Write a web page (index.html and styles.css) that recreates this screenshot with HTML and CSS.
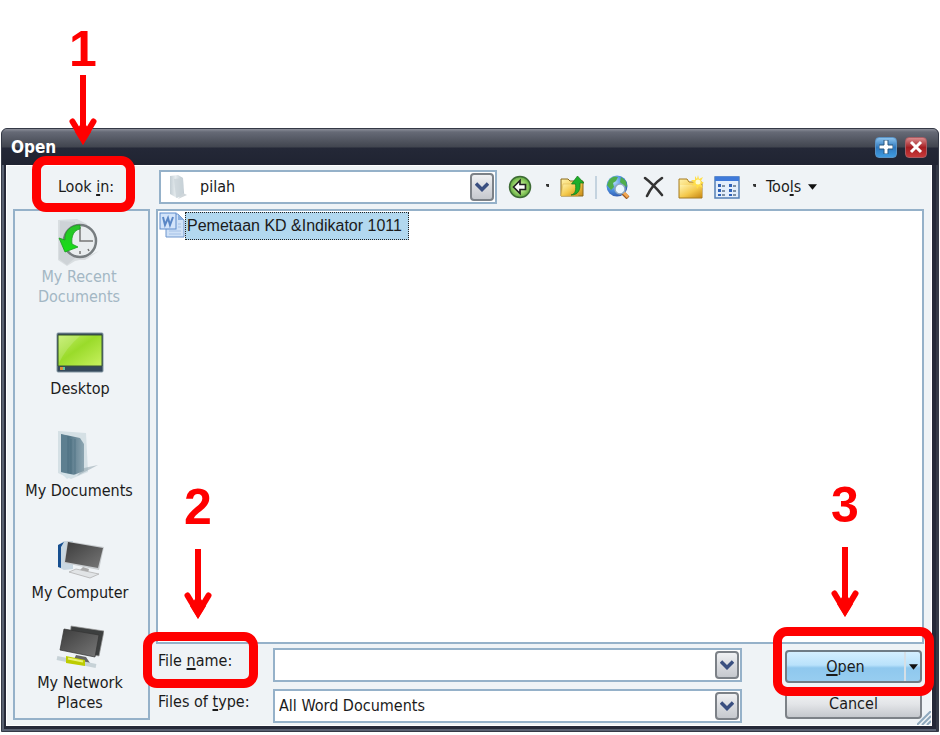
FILE: index.html
```html
<!DOCTYPE html>
<html lang="en">
<head>
<meta charset="utf-8">
<title>Open</title>
<link rel="stylesheet" href="styles.css">
</head>
<body>
<svg class="defs" aria-hidden="true">
  <defs>
    <linearGradient id="gold" x1="0" y1="0" x2="1" y2="1"><stop offset="0" stop-color="#fff3ae"/><stop offset=".55" stop-color="#f4c94c"/><stop offset="1" stop-color="#c98a16"/></linearGradient>
    <linearGradient id="lime" x1="0" y1="0" x2="1" y2="1"><stop offset="0" stop-color="#c3ee6a"/><stop offset=".45" stop-color="#9adb2a"/><stop offset="1" stop-color="#c8f160"/></linearGradient>
    <linearGradient id="green" x1="0" y1="0" x2="0" y2="1"><stop offset="0" stop-color="#2bc02b"/><stop offset="1" stop-color="#16e016"/></linearGradient>
    <linearGradient id="glass" x1="0" y1="0" x2="1" y2="0"><stop offset="0" stop-color="#8fa7b2"/><stop offset=".3" stop-color="#507385"/><stop offset="1" stop-color="#8da5b1"/></linearGradient>
    <linearGradient id="paper" x1="0" y1="0" x2="1" y2="0"><stop offset="0" stop-color="#c3ced4"/><stop offset=".4" stop-color="#e6ecef"/><stop offset="1" stop-color="#b3c0c8"/></linearGradient>
    <linearGradient id="screen" x1="0" y1="0" x2="1" y2="1"><stop offset="0" stop-color="#3c3c3c"/><stop offset="1" stop-color="#777"/></linearGradient>
    <radialGradient id="globe" cx=".35" cy=".3" r=".8"><stop offset="0" stop-color="#b7dcff"/><stop offset=".5" stop-color="#4b8fe0"/><stop offset="1" stop-color="#2b4fa5"/></radialGradient>
    <radialGradient id="back" cx=".5" cy=".5" r=".5"><stop offset="0" stop-color="#e2f6cf"/><stop offset=".6" stop-color="#9ad46c"/><stop offset="1" stop-color="#5fa83c"/></radialGradient>
    <symbol id="arrow" viewBox="0 0 28 70"><path d="M14 0V62" stroke="#f00" stroke-width="6" fill="none"/><path d="M3.500 46.500 14 64 24.500 46.500" fill="none" stroke="#f00" stroke-width="6" stroke-linecap="round"/><path d="M11 50H17L22 57 14 70 6 57Z" fill="#f00"/></symbol>
    <symbol id="chevron" viewBox="0 0 14 10"><path d="M1 1.500 7 7.500 13 1.500" fill="none" stroke="#3a4f80" stroke-width="3.500"/></symbol>
  </defs>
</svg>
<main class="dialog">
  <header class="titlebar">
    <h1 class="title">Open</h1>
    <button class="winbtn max" aria-label="Maximize"><svg viewBox="0 0 14 14"><path d="M5 0h4v5h5v4H9v5H5V9H0V5h5z" fill="#fff" stroke="#28567f"/></svg></button>
    <button class="winbtn close" aria-label="Close"><svg viewBox="0 0 14 14"><path d="M2 2 12 12M12 2 2 12" stroke="#fff" stroke-width="3"/></svg></button>
  </header>
  <div class="content">
    <div class="toolbar">
      <div class="lookin callout">
        <label for="look">Look <u>i</u>n:</label>
        <div class="pointer"><span class="num">1</span><svg><use href="#arrow"/></svg></div>
      </div>
      <div class="combo look">
        <svg class="folder" viewBox="0 0 18 24"><path d="M1 1 9 0 14 3 15 20 8 23 1 19Z" fill="url(#paper)"/><path d="M5 4 14 3V20L7 23Z" fill="#cbd5da" opacity=".8"/><path d="M14 18 18 20 9 24Z" fill="#cfd6da"/></svg>
        <select id="look"><option>pilah</option></select>
        <span class="drop"><svg><use href="#chevron"/></svg></span>
      </div>
      <div class="tools">
        <button class="tool" aria-label="Back"><svg viewBox="0 0 24 24"><circle cx="12" cy="12" r="10.500" fill="url(#back)" stroke="#3d6b35" stroke-width="1.500"/><path d="M5.500 12 12 5.500V9.500H17.500V14.500H12V18.500Z" fill="#fff" stroke="#222" stroke-width="1.700"/></svg></button>
        <span class="dot"></span>
        <button class="tool" aria-label="Up one level"><svg viewBox="0 0 24 24"><path d="M1 4H8L10 6H23V21H1Z" fill="url(#gold)" stroke="#8a6a1e"/><path d="M1 21 3 9H16L18 21Z" fill="url(#gold)" stroke="#d9b24d" stroke-width=".5"/><path d="M11 20C16 19 16 14 15.500 9H11.500L17.500 1 24 8H20C20.500 14 19 20 11 20Z" fill="#1fae2b" stroke="#127a1a" stroke-width=".7"/></svg></button>
        <span class="sep"></span>
        <button class="tool" aria-label="Search the Web"><svg viewBox="0 0 24 24"><circle cx="11" cy="11" r="10.500" fill="url(#globe)"/><path d="M3 5Q7 0 12 2L10 6 7 8 8 12 5 15 1 10ZM15 2 20 6 21 12 17 10 14 7Z" fill="#4fae4c"/><path d="M17 18 22 23" stroke="#9c5a22" stroke-width="4"/><path d="M17 17 22 22" stroke="#f3a751" stroke-width="3"/><circle cx="14" cy="14" r="5" fill="#eaf6ff" stroke="#8fa9c2" stroke-width="1.500"/></svg></button>
        <button class="tool" aria-label="Delete"><svg viewBox="0 0 24 24"><path d="M3 3Q11 9 20 20M20 3Q10 10 5 21" fill="none" stroke="#333" stroke-width="2.600" stroke-linecap="round"/></svg></button>
        <button class="tool folder-new" aria-label="Create New Folder"><svg viewBox="0 0 26 24"><path d="M1 4H9L11 7H24V23H1Z" fill="url(#gold)" stroke="#a57b20"/><path d="M2 10H24V22H2Z" fill="url(#gold)"/><path d="M20 0 21 4 25 2 23 6 26 8 23 9 25 13 21 11 19 14 18 10 14 11 16 8 13 5 17 5 17 1 19 4Z" fill="#ffdf4a"/><circle cx="20" cy="7" r="2.500" fill="#fffbd0"/></svg></button>
        <button class="tool views" aria-label="Views"><svg viewBox="0 0 26 24"><path d="M1 2H25V23H1Z" fill="#e3eefb" stroke="#5580b5" stroke-width="1.500"/><path d="M1 1.500H25V6H1Z" fill="#3f7ada"/><path d="M4 9h3v3H4zM15 9h3v3h-3zM4 14h3v3H4zM15 14h3v3h-3zM4 19h3v2H4zM15 19h3v2h-3z" fill="#2f62b8"/><path d="M8 11h3M19 11h3M8 16h3M19 16h3M8 20h3M19 20h3" stroke="#5d7186" stroke-width="1.500"/></svg></button>
        <span class="dot"></span>
        <button class="menu"><span>Too<u>l</u>s</span><svg viewBox="0 0 10 6"><path d="M0 0H10L5 6Z" fill="#111"/></svg></button>
      </div>
    </div>
    <div class="panes">
      <nav class="places">
        <a href="#" class="place dim"><svg viewBox="0 0 48 50"><path d="M3 4 22 3 32 8 34 42 20 45 12 50 3 44Z" fill="#d9dee1"/><path d="M5 5 20 6V42L12 49 4 43Z" fill="#c9cfd3" opacity=".7"/><path d="M24 44 44 35 30 44Z" fill="#d9dcdf"/><circle cx="25" cy="25" r="16" fill="#e9edef" stroke="#777d80" stroke-width="2.500"/><path d="M25 11V25H36M25 38v-3M38 25h-2M14 32l2-2M34 35l-1-2" fill="none" stroke="#777" stroke-width="1.500"/><path d="M25 9C15 9 9 16 10 24L4 22 10 36 23 31 17 28C16 20 19 14 25 13Z" fill="url(#green)" stroke="#1a9c20" stroke-width=".8"/></svg><span>My Recent<br>Documents</span></a>
        <a href="#" class="place desktop"><svg viewBox="0 0 48 50"><rect x="1" y="9" width="46" height="39" rx="1" fill="#34485a" stroke="#8194a0"/><path d="M2 11H46V42H2Z" fill="url(#lime)" stroke="#385238"/><path d="M3 12H24Q10 24 3 39Z" fill="#fff" opacity=".15"/><path d="M4 43h3v3H4z" fill="#d98f3d"/><path d="M7 43h2v3H7z" fill="#5ec7a0"/></svg><span>Desktop</span></a>
        <a href="#" class="place docs"><svg viewBox="0 0 48 50"><path d="M3 1 31 3 33 42 16 49 3 43Z" fill="#d5e0e5"/><path d="M6 4 25 8 29 14 29 41 16 46 6 43Z" fill="url(#glass)"/><path d="M6 4 12 6V44L6 42Z" fill="#5d7f90"/><path d="M16 9V45M20 9V44" stroke="#426678" opacity=".5"/><path d="M29 38 43 35 22 46Z" fill="#8a9da8" opacity=".5"/><path d="M5 42 12 49 20 45 10 43Z" fill="#d4e2e8"/></svg><span>My Documents</span></a>
        <a href="#" class="place computer"><svg viewBox="0 0 48 50"><path d="M2 13 8 9H17V37L8 38 2 35Z" fill="#c9d8e2"/><path d="M2 13 8 10 5 15V36L2 35Z" fill="#174f90"/><path d="M11 9 48 15 43 38 8 31Z" fill="#c9cdd0"/><path d="M12 10 47 16 42 36 9 30Z" fill="url(#screen)"/><path d="M27 35 33 37 32 41 23 39Z" fill="#aaa"/><path d="M13 40 20 37 43 42 34 46Z" fill="#e1e4e6" stroke="#aaa" stroke-width=".7"/></svg><span>My Computer</span></a>
        <a href="#" class="place network"><svg viewBox="0 0 48 50"><path d="M15 4 48 9 43 34 13 29Z" fill="#3d3f3f" stroke="#999" stroke-width=".7"/><path d="M8 7 43 13 39 35 4 28Z" fill="url(#screen)" stroke="#333" stroke-width=".7"/><path d="M20 33 30 35 34 41 17 40Z" fill="#666"/><path d="M1 36 40 44" stroke="#c7d2d7" stroke-width="4"/><path d="M10 34 29 38V44L10 41Z" fill="#bdcc00"/><path d="M12 36.500 27 39.500" stroke="#eaf274" stroke-width="2"/></svg><span>My Network<br>Places</span></a>
      </nav>
      <div class="right">
        <section class="files" aria-label="Files">
          <a href="#" class="file"><svg viewBox="0 0 26 26"><path d="M7 2H19L25 8V25H7Z" fill="#cfe1f7" stroke="#6f96cd"/><path d="M19 2V8H25Z" fill="#8aafdf"/><path d="M10 19H22M10 22H22M19 12H22M19 15H22" stroke="#a5c1e6"/><rect x="1" y="1" width="16" height="16" fill="#d3e4fa" stroke="#5d8bcb"/><path d="M4 5 6 13 9 6 11 13 14 5" fill="none" stroke="#5a87c6" stroke-width="2"/></svg><span>Pemetaan KD &amp;Indikator 1011</span></a>
        </section>
        <div class="bottom">
          <div class="fields">
            <div class="callout fname">
              <label for="fname">File <u>n</u>ame:</label>
              <div class="pointer"><span class="num">2</span><svg><use href="#arrow"/></svg></div>
            </div>
            <div class="combo"><input id="fname" type="text"><button class="drop" aria-label="Show recent names"><svg><use href="#chevron"/></svg></button></div>
            <label for="ftype">Files of <u>t</u>ype:</label>
            <div class="combo"><select id="ftype"><option>All Word Documents</option></select><span class="drop"><svg><use href="#chevron"/></svg></span></div>
          </div>
          <div class="actions">
            <div class="callout openwrap">
              <button class="btn open"><u>O</u>pen</button>
              <button class="split" aria-label="Open options"><svg viewBox="0 0 10 6"><path d="M0 0H10L5 6Z" fill="#111"/></svg></button>
              <div class="pointer"><span class="num">3</span><svg><use href="#arrow"/></svg></div>
            </div>
            <button class="btn cancel">Cancel</button>
          </div>
        </div>
      </div>
    </div>
    <svg class="grip" viewBox="0 0 14 14" aria-hidden="true"><path d="M0 14 14 0M5 14 14 5M10 14 14 10" stroke="#8fa9bd" stroke-width="2"/></svg>
  </div>
</main>
</body>
</html>
```
FILE: styles.css
```css
* { box-sizing: border-box; }
body {
  margin: 0;
  padding: 128px 1px 0;
  background: #fff;
  color: #1b1b1b;
  font: 16px/20px "DejaVu Sans Condensed", "DejaVu Sans", sans-serif;
}
button, input, select { font: inherit; color: inherit; border: 0; background: none; padding: 0; margin: 0; }
a { color: inherit; text-decoration: none; }
u { text-underline-offset: 2px; text-decoration-thickness: 2px; }
svg { display: block; flex: none; }
.defs { position: absolute; width: 0; height: 0; }

.dialog {
  background: #252938;
  border: 1px solid #343946;
  border-radius: 6px 6px 0 0;
  padding: 0 6px 5px 4px;
  box-shadow: inset 2px 0 #596171, inset -2px 0 #343946, inset 0 -2px #596171;
}
.titlebar {
  display: flex;
  align-items: center;
  gap: 8px;
  height: 36px;
  margin: 0 -6px 0 -4px;
  padding: 0 11px 0 9px;
  border-radius: 5px 5px 0 0;
  background: linear-gradient(#8b8e99 0, #666a76 3px, #41454f 18px, #242837 19px, #202432);
}
.title { flex: 1; margin: 0; color: #fff; font-size: 17px; line-height: 20px; font-weight: bold; }
.winbtn { display: grid; place-items: center; width: 22px; height: 21px; border-radius: 4px; border: 1px solid #c3c7d2; }
.winbtn svg { width: 14px; height: 14px; }
.max { background: linear-gradient(#8ac2ed, #2f78bd 50%, #3f9be0); border-color: #5b93c5; }
.close { background: linear-gradient(#d98a8c, #a51e22 50%, #c93a3a); border-color: #a85c63; }

.content {
  position: relative;
  background: #eff3f6;
  border: 1px solid #fff;
  padding: 4px 7px 2px 6px;
}
.toolbar { display: flex; align-items: center; height: 39px; padding-bottom: 5px; }
.lookin { width: 146px; text-align: center; }
.combo {
  position: relative;
  display: flex;
  align-items: center;
  height: 34px;
  background: #fff;
  border: 2px solid #95b1c9;
}
.combo input, .combo select { appearance: none; flex: 1; min-width: 0; height: 30px; padding: 0 30px 0 4px; outline: 0; }
.combo .drop { position: absolute; right: 1px; top: 1px; }
.combo span.drop { pointer-events: none; }
.drop {
  display: grid;
  place-items: center;
  width: 24px;
  height: 28px;
  border: 2px solid #7c8187;
  border-radius: 4px;
  background: linear-gradient(#f0f1f3, #d9dbdf 50%, #c6c9ce);
}
.drop svg { width: 14px; height: 10px; }
.combo.look { width: 338px; }
.look .folder { position: absolute; left: 8px; width: 18px; height: 24px; }
.combo.look select { padding-left: 39px; }

.tools { display: flex; align-items: center; margin-left: 11px; }
.tool { width: 24px; height: 24px; }
.tool svg { width: 100%; height: 100%; }
.dot { width: 3px; height: 3px; margin: 0 11px 4px 14px; background: #333; border-radius: 0 0 0 2px; }
.sep { width: 2px; height: 23px; margin: 0 9px 0 11px; background: #c4d3df; }
.tool + .tool { margin-left: 12px; }
.folder-new, .views { width: 26px; }
.tool.views { margin-left: 10px; }
.views + .dot { margin: 0 10px 4px 13px; }
.menu { display: flex; align-items: center; gap: 7px; }
.menu svg { width: 9px; height: 6px; }

.panes { display: flex; gap: 6px; }
.places {
  flex: none;
  width: 137px;
  height: 511px;
  padding-top: 5px;
  border: 2px solid #95b1c9;
  text-align: center;
}
.place { display: flex; flex-direction: column; align-items: center; gap: 1px; margin: 0 -2px; padding-right: 5px; }
.place svg { width: 48px; height: 50px; }
.dim { color: #a3b7c4; }
.desktop { margin-top: 17px; padding-right: 3px; gap: 5px; }
.docs { margin-top: 31px; }
.computer { margin-top: 31px; padding-right: 3px; }
.network { margin-top: 19px; padding-right: 3px; }

.right { flex: 1; min-width: 0; }
.files { height: 435px; padding: 1px; background: #fff; border: 2px solid #95b1c9; }
.file { display: inline-flex; align-items: flex-start; font-family: "Liberation Sans", sans-serif; font-size: 16px; }
.file svg { width: 26px; height: 26px; }
.file span { padding: 3px 6px 3px 1px; border: 1px dotted #222; background: #b2d8ef; }
.bottom { display: flex; padding: 4px 2px 0; }
.fields { flex: 1; display: grid; grid-template-columns: 115px 1fr; row-gap: 7px; align-items: center; }
.fields label { align-self: start; padding-top: 3px; }
.fname { align-self: start; padding-top: 3px; }
.fname label { padding: 0; }
.actions { width: 137px; margin-left: 43px; padding-top: 2px; display: flex; flex-direction: column; gap: 6px; }
.openwrap { display: flex; height: 33px; border: 2px solid #6f7c86; border-radius: 4px; background: linear-gradient(#d4efff, #b9e2fb 45%, #8fc8ee 55%, #97cdf0); }
.btn { text-align: center; }
.open { flex: 1; }
.split { display: grid; place-items: center; width: 16px; border-left: 2px solid #d5dfe6; }
.split svg { width: 9px; height: 6px; }
.cancel { height: 30px; border: 2px solid #7c8187; border-radius: 4px; background: linear-gradient(#f3f4f5, #e3e5e8 50%, #c5c8cd); }

.callout { position: relative; }
.callout::after {
  content: "";
  position: absolute;
  z-index: 2;
  inset: -21px 24px -15px 19px;
  border: 9px solid #f00;
  border-radius: 14px;
  pointer-events: none;
}
.fname::after { inset: -16px 15px -17px -15px; }
.openwrap::after { inset: -25px -14px -15px -14px; }
.pointer { position: absolute; z-index: 3; left: 56px; bottom: 52px; width: 28px; color: #f00; text-align: center; pointer-events: none; }
.pointer .num { display: block; font: bold 50px/44px "Liberation Sans", sans-serif; }
.pointer svg { width: 28px; height: 70px; margin-top: 4px; }
.fname .pointer { left: 26px; }
.openwrap .pointer { left: 44px; bottom: 64px; }
.fname .pointer svg, .openwrap .pointer svg { margin-top: 20px; }
.grip { position: absolute; right: 0; bottom: 0; width: 14px; height: 14px; }
```
